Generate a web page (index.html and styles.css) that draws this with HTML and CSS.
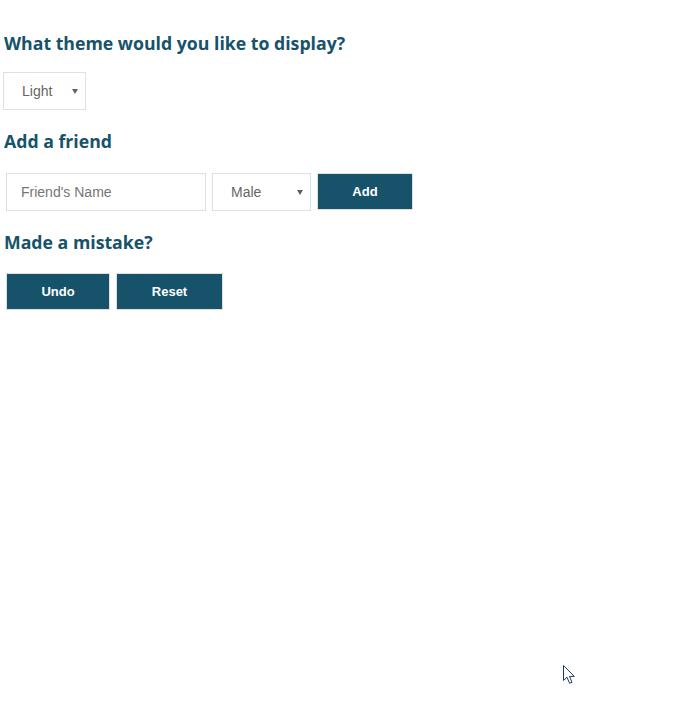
FILE: index.html
```html
<!DOCTYPE html>
<html>
<head>
<meta charset="utf-8">
<link rel="stylesheet" href="styles.css">
</head>
<body>
<main class="app">
  <h2 class="title title-first">What theme would you like to display?</h2>
  <div class="row row-theme">
    <div class="select select-theme"><span class="select-text">Light</span><span class="caret"></span></div>
  </div>
  <h2 class="title">Add a friend</h2>
  <div class="row row-form">
    <div class="input"><span class="placeholder">Friend's Name</span></div>
    <div class="select select-gender"><span class="select-text">Male</span><span class="caret"></span></div>
    <button class="btn btn-add">Add</button>
  </div>
  <h2 class="title">Made a mistake?</h2>
  <div class="row row-form row-last">
    <button class="btn btn-undo">Undo</button>
    <button class="btn btn-reset">Reset</button>
  </div>
</main>
<svg class="cursor" width="14" height="22" viewBox="0 0 14 22"><path d="M0.5 0.5 L0.5 15.5 L4 12.2 L6.6 18.3 L9 17.3 L6.5 11.4 L11.3 11.4 Z" fill="#fff" stroke="#1a3e5c" stroke-width="1"/></svg>
</body>
</html>
```
FILE: styles.css
```css
html, body {
  margin: 0;
  padding: 0;
  background: #fff;
}
body {
  width: 690px;
  height: 718px;
  position: relative;
  overflow: hidden;
}
.app {
  padding: 0 0 0 3px;
}
.title {
  margin: 0;
  font-family: "Open Sans", "Noto Sans", sans-serif;
  font-weight: 700;
  font-size: 17.7px;
  line-height: 24px;
  color: #16536a;
  padding-left: 1px;
}
.title-first {
  padding-top: 31px;
}
.row {
  display: flex;
  gap: 6px;
}
.row-theme {
  margin-top: 17px;
  margin-bottom: 19px;
}
.row-form {
  margin: 20px 0 19px 3px;
}
.row-last {
  margin-top: 19px;
}
.select, .input {
  box-sizing: border-box;
  height: 38px;
  border: 1px solid #dde1e1;
  display: flex;
  align-items: center;
  font-family: "Liberation Sans", Arial, sans-serif;
  font-size: 14px;
  color: #666;
  position: relative;
  background: #fff;
}
.select-theme {
  width: 83px;
  padding-left: 18px;
}
.select-gender {
  width: 99px;
  padding-left: 18px;
}
.input {
  width: 200px;
  padding-left: 14px;
}
.placeholder {
  color: #757575;
}
.caret {
  position: absolute;
  right: 7px;
  top: 16px;
  width: 0;
  height: 0;
  border-left: 3px solid transparent;
  border-right: 3px solid transparent;
  border-top: 5px solid #6f5a5f;
}
.btn {
  box-sizing: border-box;
  height: 37px;
  border: 1px solid #dde1e1;
  background: #16536a;
  color: #fff;
  font-family: "Liberation Sans", Arial, sans-serif;
  font-weight: 700;
  font-size: 13px;
  padding: 0;
  cursor: pointer;
}
.btn-add { width: 96px; }
.btn-undo { width: 104px; }
.btn-reset { width: 107px; }
.cursor {
  position: absolute;
  left: 563px;
  top: 665px;
}
```
